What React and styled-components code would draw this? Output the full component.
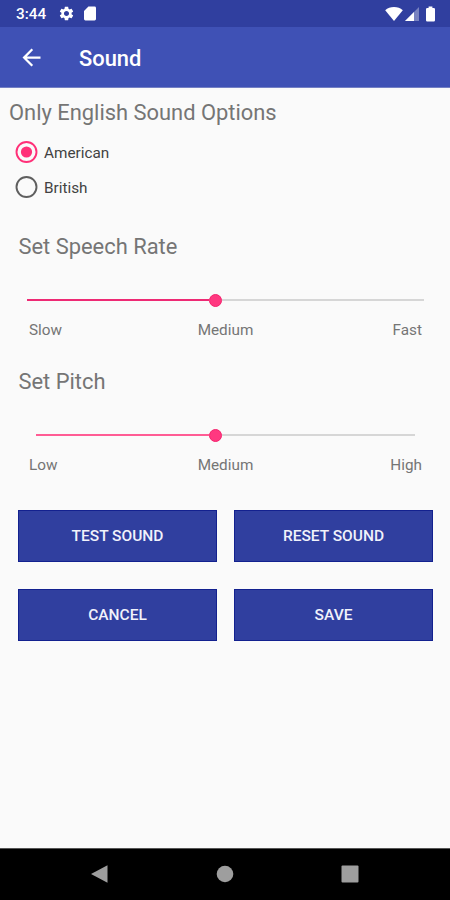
import React, { useState } from 'react'
import styled, { createGlobalStyle } from 'styled-components'

const GlobalStyle = createGlobalStyle`
  * {
    box-sizing: border-box;
  }

  body {
    margin: 0;
    background: #fafafa;
    font-family: Roboto, sans-serif;
  }
`

const Screen = styled.div`
  display: flex;
  flex-direction: column;
  width: 450px;
  height: 900px;
  background: #fafafa;
  overflow: hidden;
`

const StatusBar = styled.div`
  display: flex;
  align-items: center;
  height: 27px;
  padding: 0 15px 0 16px;
  background: #303f9f;
  color: #ffffff;
`

const Clock = styled.span`
  width: 42px;
  padding-top: 1px;
  font-size: 15.3px;
  font-weight: 500;
  line-height: 26px;
`

const StatusIcons = styled.div`
  display: flex;
  align-items: center;
  margin-left: ${({ $end }) => ($end ? 'auto' : '0')};
`

const AppBar = styled.header`
  display: flex;
  align-items: center;
  height: 61px;
  padding-left: 18px;
  background: #3f51b5;
  border-bottom: 1px solid #7480c4;
  color: #ffffff;
`

const BackButton = styled.button`
  display: flex;
  width: 61px;
  padding: 0;
  border: 0;
  background: none;
  color: inherit;
`

const Title = styled.h1`
  margin: 0;
  padding-top: 3px;
  font-size: 21.9px;
  font-weight: 500;
  line-height: 30px;
`

const Content = styled.main`
  flex: 1;
`

const Heading = styled.h2`
  margin: 0;
  padding-left: ${({ $indent }) => $indent}px;
  color: #757575;
  font-size: 21.9px;
  font-weight: 400;
  line-height: 30px;
`

const VoiceSection = styled.section`
  padding-top: 10px;
  height: 144px;
`

const RadioList = styled.div`
  padding: 7px 0 0 15px;
`

const RadioRow = styled.div`
  display: flex;
  align-items: center;
  gap: 6px;
  height: 35px;
  color: #424242;
  font-size: 15.3px;
  cursor: pointer;
`

const SliderSection = styled.section`
  height: 135px;
`

const SliderTrack = styled.div`
  display: flex;
  align-items: center;
  height: 14px;
  margin: 31px ${({ $right }) => $right}px 0 ${({ $left }) => $left}px;
`

const TrackFill = styled.div`
  height: 2px;
  background: ${({ $color }) => $color};
`

const TrackRest = styled.div`
  flex: 1;
  height: 2px;
  background: #d6d6d6;
`

const Thumb = styled.div`
  width: 13px;
  height: 13px;
  border-radius: 50%;
  background: #ff3880;
  border: 1px solid #f5216c;
`

const Scale = styled.div`
  display: grid;
  grid-template-columns: 1fr auto 1fr;
  margin: 13px 28px 0 29px;
  color: #757575;
  font-size: 15.3px;
  line-height: 20px;
`

const ScaleLabel = styled.span`
  text-align: ${({ $align }) => $align || 'left'};
`

const ButtonGrid = styled.div`
  display: grid;
  grid-template-columns: 199px 199px;
  grid-auto-rows: 52px;
  gap: 27px 17px;
  padding: 8px 0 0 18px;
`

const ActionButton = styled.button`
  padding: 0;
  border: 1px solid #13218f;
  background: #303f9f;
  color: #f1f2fb;
  font-family: inherit;
  font-size: 15.5px;
  font-weight: 500;
`

const NavBar = styled.nav`
  display: flex;
  align-items: center;
  justify-content: space-between;
  height: 52px;
  padding: 0 91px 1px 90px;
  border-top: 1px solid #555555;
  background: #000000;
`

const RadioIcon = ({ checked }) => (
  <svg width="23" height="23" viewBox="0 0 23 23" fill="none">
    <circle cx="11.5" cy="11" r="10" stroke={checked ? '#ff3078' : '#5f5f5f'} strokeWidth="1.9" />
    {checked && <circle cx="11.5" cy="11" r="5.6" fill="#ff3078" />}
  </svg>
)

const GearIcon = () => (
  <svg width="17" height="17" viewBox="0 0 24 24" fill="currentColor">
    <path d="M19.14 12.94c.04-.3.06-.61.06-.94 0-.32-.02-.64-.07-.94l2.03-1.58c.18-.14.23-.41.12-.61l-1.92-3.32c-.12-.22-.37-.29-.59-.22l-2.39.96c-.5-.38-1.03-.7-1.62-.94l-.36-2.54c-.04-.24-.24-.41-.48-.41h-3.84c-.24 0-.43.17-.47.41l-.36 2.54c-.59.24-1.13.57-1.62.94l-2.39-.96c-.22-.08-.47 0-.59.22L2.74 8.87c-.12.21-.08.47.12.61l2.03 1.58c-.05.3-.09.63-.09.94s.02.64.07.94l-2.03 1.58c-.18.14-.23.41-.12.61l1.92 3.32c.12.22.37.29.59.22l2.39-.96c.5.38 1.03.7 1.62.94l.36 2.54c.05.24.24.41.48.41h3.84c.24 0 .44-.17.47-.41l.36-2.54c.59-.24 1.13-.56 1.62-.94l2.39.96c.22.08.47 0 .59-.22l1.92-3.32c.12-.22.07-.47-.12-.61l-2.01-1.58zM12 15.6c-1.98 0-3.6-1.62-3.6-3.6s1.62-3.6 3.6-3.6 3.6 1.62 3.6 3.6-1.62 3.6-3.6 3.6z" />
  </svg>
)

const SdCardIcon = () => (
  <svg width="12" height="15" viewBox="0 0 12 15" fill="currentColor">
    <path d="M4.4 0.5H10.6Q12 0.5 12 1.9V13.1Q12 14.5 10.6 14.5H1.4Q0 14.5 0 13.1V4.9Z" />
  </svg>
)

const WifiIcon = () => (
  <svg width="18" height="16" viewBox="0 0 18 16" fill="currentColor">
    <path d="M9 15 0.2 4.2Q3.8 1 9 1T17.8 4.2Z" />
  </svg>
)

const SignalIcon = () => (
  <svg width="15" height="16" viewBox="0 0 15 16" fill="currentColor">
    <path d="M15 1V15H1Z" opacity="0.35" />
    <path d="M10 6V15H1Z" />
  </svg>
)

const BatteryIcon = () => (
  <svg width="9" height="16" viewBox="0 0 9 16" fill="currentColor">
    <path d="M2.6 0.4H6.4V2H7.8Q9 2 9 3.2V14.3Q9 15.5 7.8 15.5H1.2Q0 15.5 0 14.3V3.2Q0 2 1.2 2H2.6Z" />
  </svg>
)

const IconGap = styled.span`
  width: ${({ $size }) => $size}px;
`

const BackArrow = () => (
  <svg width="27" height="27" viewBox="0 0 24 24" fill="currentColor">
    <path d="M20 11H7.83l5.59-5.59L12 4l-8 8 8 8 1.41-1.41L7.83 13H20v-2z" />
  </svg>
)

const Slider = ({ title, labels, left, right, fill, color }) => (
  <SliderSection>
    <Heading $indent={18.5}>{title}</Heading>
    <SliderTrack $left={left} $right={right}>
      <TrackFill $color={color} style={{ width: fill }} />
      <Thumb />
      <TrackRest />
    </SliderTrack>
    <Scale>
      <ScaleLabel>{labels[0]}</ScaleLabel>
      <ScaleLabel>{labels[1]}</ScaleLabel>
      <ScaleLabel $align="right">{labels[2]}</ScaleLabel>
    </Scale>
  </SliderSection>
)

const voices = ['American', 'British']
const actions = ['TEST SOUND', 'RESET SOUND', 'CANCEL', 'SAVE']

const App = () => {
  const [voice, setVoice] = useState('American')

  return (
    <>
      <GlobalStyle />
      <Screen>
        <StatusBar>
          <Clock>3:44</Clock>
          <StatusIcons>
            <GearIcon />
            <IconGap $size={9} />
            <SdCardIcon />
          </StatusIcons>
          <StatusIcons $end>
            <WifiIcon />
            <IconGap $size={1} />
            <SignalIcon />
            <IconGap $size={7} />
            <BatteryIcon />
          </StatusIcons>
        </StatusBar>
        <AppBar>
          <BackButton aria-label="Back">
            <BackArrow />
          </BackButton>
          <Title>Sound</Title>
        </AppBar>
        <Content>
          <VoiceSection>
            <Heading $indent={9}>Only English Sound Options</Heading>
            <RadioList>
              {voices.map(name => (
                <RadioRow key={name} onClick={() => setVoice(name)}>
                  <RadioIcon checked={voice === name} />
                  {name}
                </RadioRow>
              ))}
            </RadioList>
          </VoiceSection>
          <Slider
            title="Set Speech Rate"
            labels={['Slow', 'Medium', 'Fast']}
            left={27}
            right={26}
            fill={182}
            color="#ee2a74"
          />
          <Slider
            title="Set Pitch"
            labels={['Low', 'Medium', 'High']}
            left={36}
            right={35}
            fill={173}
            color="#ff5c94"
          />
          <ButtonGrid>
            {actions.map(label => (
              <ActionButton key={label}>{label}</ActionButton>
            ))}
          </ButtonGrid>
        </Content>
        <NavBar>
          <svg width="18" height="18" viewBox="0 0 18 18" fill="#9e9e9e">
            <path d="M1 9 17.5 0.3V17.7Z" />
          </svg>
          <svg width="18" height="18" viewBox="0 0 18 18" fill="#9e9e9e">
            <circle cx="9" cy="9" r="8.3" />
          </svg>
          <svg width="18" height="18" viewBox="0 0 18 18" fill="#9e9e9e">
            <rect x="0.5" y="0.5" width="17" height="17" rx="1" />
          </svg>
        </NavBar>
      </Screen>
    </>
  )
}

export default App
